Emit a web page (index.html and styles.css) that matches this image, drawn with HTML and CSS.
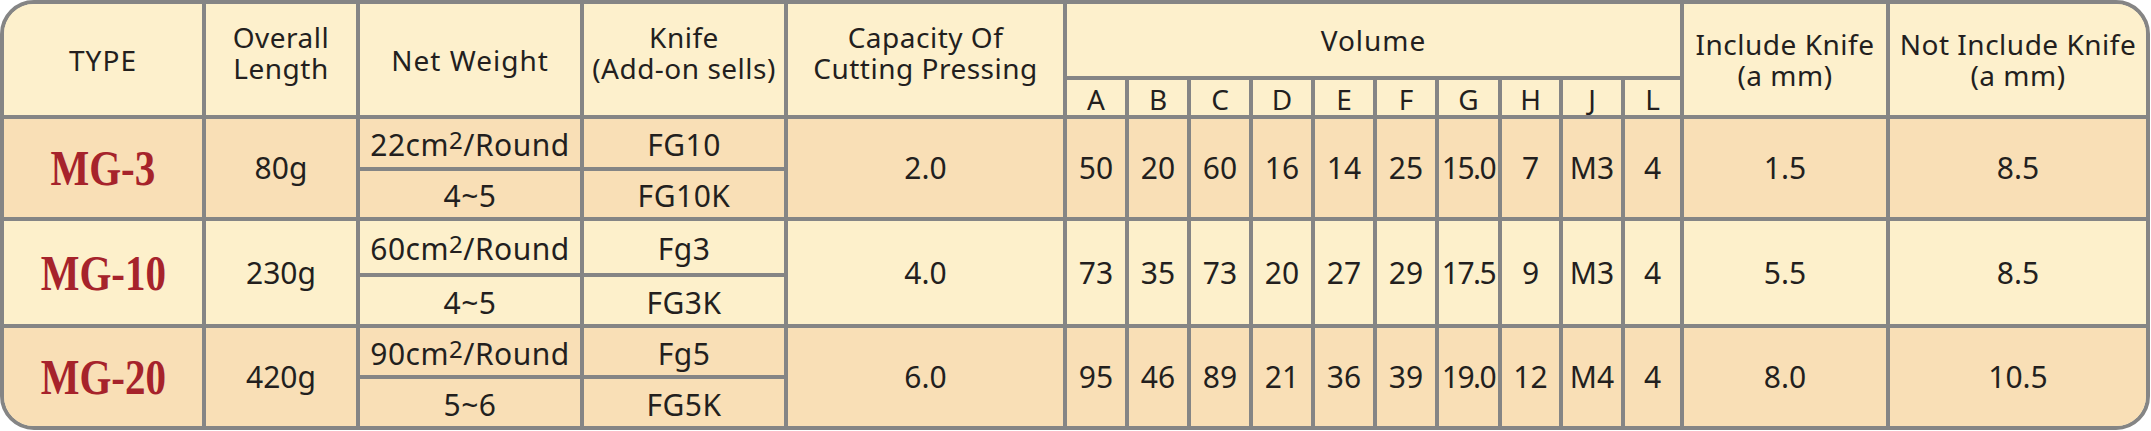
FILE: index.html
```html
<!DOCTYPE html>
<html lang="en">

<head>
    <meta charset="UTF-8">
    <title>MG Series Specifications</title>
    <link rel="stylesheet" href="styles.css">
</head>

<body>
    <div class="spec-box">
        <table class="spec">
            <colgroup>
                <col class="c-type">
                <col class="c-length">
                <col class="c-net">
                <col class="c-knife">
                <col class="c-cap">
                <col class="c-v"><col class="c-v"><col class="c-v"><col class="c-v"><col class="c-v">
                <col class="c-v"><col class="c-vg"><col class="c-vh"><col class="c-v"><col class="c-vl">
                <col class="c-inc">
                <col class="c-not">
            </colgroup>
            <tr class="head head-top">
                <th rowspan="2">TYPE</th>
                <th rowspan="2" class="two up">Overall<br>Length</th>
                <th rowspan="2">Net&nbsp;Weight</th>
                <th rowspan="2" class="two up">Knife<br>(Add-on sells)</th>
                <th rowspan="2" class="two up">Capacity Of<br>Cutting Pressing</th>
                <th colspan="10">Volume</th>
                <th rowspan="2" class="two">Include Knife<br>(a mm)</th>
                <th rowspan="2" class="two">Not Include Knife<br>(a mm)</th>
            </tr>
            <tr class="head head-letters">
                <th>A</th><th>B</th><th>C</th><th>D</th><th>E</th>
                <th>F</th><th>G</th><th>H</th><th>J</th><th>L</th>
            </tr>

            <!-- MG-3 -->
            <tr class="row-dark r1a">
                <td rowspan="2" class="model"><span>MG-3</span></td>
                <td rowspan="2">80g</td>
                <td class="sub">22cm<sup>2</sup>/Round</td>
                <td class="sub">FG10</td>
                <td rowspan="2">2.0</td>
                <td rowspan="2">50</td><td rowspan="2">20</td><td rowspan="2">60</td><td rowspan="2">16</td><td rowspan="2">14</td>
                <td rowspan="2">25</td><td rowspan="2" class="tight">15.0</td><td rowspan="2">7</td><td rowspan="2">M3</td><td rowspan="2">4</td>
                <td rowspan="2">1.5</td>
                <td rowspan="2">8.5</td>
            </tr>
            <tr class="row-dark r1b">
                <td class="sub">4~5</td>
                <td class="sub">FG10K</td>
            </tr>

            <!-- MG-10 -->
            <tr class="row-light r2a">
                <td rowspan="2" class="model"><span>MG-10</span></td>
                <td rowspan="2">230g</td>
                <td class="sub">60cm<sup>2</sup>/Round</td>
                <td class="sub">Fg3</td>
                <td rowspan="2">4.0</td>
                <td rowspan="2">73</td><td rowspan="2">35</td><td rowspan="2">73</td><td rowspan="2">20</td><td rowspan="2">27</td>
                <td rowspan="2">29</td><td rowspan="2" class="tight">17.5</td><td rowspan="2">9</td><td rowspan="2">M3</td><td rowspan="2">4</td>
                <td rowspan="2">5.5</td>
                <td rowspan="2">8.5</td>
            </tr>
            <tr class="row-light r2b">
                <td class="sub">4~5</td>
                <td class="sub">FG3K</td>
            </tr>

            <!-- MG-20 -->
            <tr class="row-dark r3a">
                <td rowspan="2" class="model"><span>MG-20</span></td>
                <td rowspan="2">420g</td>
                <td class="sub">90cm<sup>2</sup>/Round</td>
                <td class="sub">Fg5</td>
                <td rowspan="2">6.0</td>
                <td rowspan="2">95</td><td rowspan="2">46</td><td rowspan="2">89</td><td rowspan="2">21</td><td rowspan="2">36</td>
                <td rowspan="2">39</td><td rowspan="2" class="tight">19.0</td><td rowspan="2">12</td><td rowspan="2">M4</td><td rowspan="2">4</td>
                <td rowspan="2">8.0</td>
                <td rowspan="2">10.5</td>
            </tr>
            <tr class="row-dark r3b">
                <td class="sub">5~6</td>
                <td class="sub">FG5K</td>
            </tr>
        </table>
    </div>
</body>

</html>
```

FILE: styles.css
```css
body {
    margin: 0;
    background-color: #ffffff;
    font-family: "Noto Sans", "Open Sans", sans-serif;
    color: #231f1e;
}

.spec-box {
    width: 2150px;
    height: 430px;
    box-sizing: border-box;
    border: 4px solid #858585;
    border-radius: 34px;
    overflow: hidden;
    background-color: #fdf0cc;
}

.spec {
    width: 2142px;
    height: 422px;
    table-layout: fixed;
    border-collapse: collapse;
    border-style: hidden;
}

.c-type { width: 200px; }
.c-length { width: 154px; }
.c-net { width: 224px; }
.c-knife { width: 204px; }
.c-cap { width: 279px; }
.c-v { width: 62px; }
.c-vg { width: 63px; }
.c-vh { width: 61px; }
.c-vl { width: 59px; }
.c-inc { width: 206px; }
.c-not { width: 258px; }

.spec th,
.spec td {
    border: 4px solid #858585;
    padding: 0;
    text-align: center;
    vertical-align: middle;
    white-space: nowrap;
    overflow: visible;
}

.spec th {
    font-weight: normal;
    font-size: 28px;
    line-height: 30px;
    letter-spacing: 1px;
    background-color: #fdf0cc;
}

.spec th.two {
    line-height: 31px;
    letter-spacing: 0.5px;
}

.spec th.up {
    padding-bottom: 14px;
}

.head-top { height: 74px; }
.head-letters { height: 39px; }
.head-letters th { padding-top: 2px; letter-spacing: 0; }

.spec td {
    font-size: 30px;
    line-height: 32px;
}

.row-dark td { background-color: #f9dfb6; }
.row-light td { background-color: #fdf0cb; }

.r1a { height: 52px; }
.r1b { height: 50px; }
.r2a { height: 56px; }
.r2b { height: 51px; }
.r3a { height: 51px; }
.r3b { height: 49px; }

.spec td.sub {
    padding-top: 4px;
    letter-spacing: 0.5px;
}

.spec td.tight {
    letter-spacing: -1.5px;
}

.spec sup {
    font-size: 0.8em;
    line-height: 0;
    vertical-align: 0.3em;
}

.spec td.model {
    font-family: "Liberation Serif", serif;
    font-weight: bold;
    font-size: 50px;
    line-height: 50px;
    color: #a6232b;
}

.model span {
    display: inline-block;
    transform: scaleX(0.82);
}
```
